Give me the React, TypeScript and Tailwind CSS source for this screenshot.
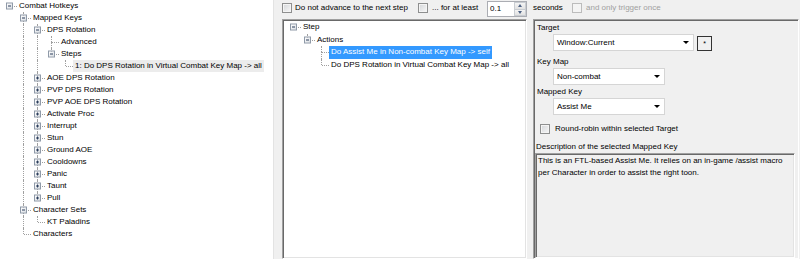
import React from 'react';

type TNode = { label: string; children?: TNode[]; collapsed?: boolean; sel?: 'gray' | 'blue' };
type Flat = { node: TNode; level: number; last: boolean; cont: boolean[]; first: boolean };

function flatten(nodes: TNode[], level: number, cont: boolean[], out: Flat[]) {
  nodes.forEach((n, i) => {
    const last = i === nodes.length - 1;
    out.push({ node: n, level, last, cont, first: level === 0 && i === 0 });
    if (n.children && n.children.length && !n.collapsed) flatten(n.children, level + 1, [...cont, !last], out);
  });
}

const c = (label: string): TNode => ({ label, children: [{ label: 'x' }], collapsed: true });

const leftData: TNode[] = [
  {
    label: 'Combat Hotkeys',
    children: [
      {
        label: 'Mapped Keys',
        children: [
          {
            label: 'DPS Rotation',
            children: [
              { label: 'Advanced' },
              {
                label: 'Steps',
                children: [{ label: '1: Do DPS Rotation in Virtual Combat Key Map -> all', sel: 'gray' }],
              },
            ],
          },
          c('AOE DPS Rotation'),
          c('PVP DPS Rotation'),
          c('PVP AOE DPS Rotation'),
          c('Activate Proc'),
          c('Interrupt'),
          c('Stun'),
          c('Ground AOE'),
          c('Cooldowns'),
          c('Panic'),
          c('Taunt'),
          c('Pull'),
        ],
      },
      { label: 'Character Sets', children: [{ label: 'KT Paladins' }] },
      { label: 'Characters' },
    ],
  },
];

const midData: TNode[] = [
  {
    label: 'Step',
    children: [
      {
        label: 'Actions',
        children: [
          { label: 'Do Assist Me in Non-combat Key Map -> self', sel: 'blue' },
          { label: 'Do DPS Rotation in Virtual Combat Key Map -> all' },
        ],
      },
    ],
  },
];

function Expander({ open }: { open: boolean }) {
  return (
    <div className="absolute left-[4px] top-1/2 -translate-y-1/2 w-[7px] h-[7px] border border-[#8f9aa8] bg-gradient-to-br from-white to-[#d9dde2]">
      <div className="absolute left-[1px] top-[2px] w-[3px] h-[1px] bg-[#2c3e5c]" />
      {!open && <div className="absolute left-[2px] top-[1px] w-[1px] h-[3px] bg-[#2c3e5c]" />}
    </div>
  );
}

function Tree({ data, rowH }: { data: TNode[]; rowH: string }) {
  const rows: Flat[] = [];
  flatten(data, 0, [], rows);
  return (
    <div className="flex flex-col">
      {rows.map((f, i) => {
        const kids = !!(f.node.children && f.node.children.length);
        const sel =
          f.node.sel === 'blue'
            ? 'bg-[#3399ff] text-white'
            : f.node.sel === 'gray'
            ? 'bg-[#ececec]'
            : '';
        return (
          <div key={i} className={`flex ${rowH}`}>
            {f.cont.map((cc, k) => (
              <div key={k} className="relative w-[14px] shrink-0">
                {cc && <div className="absolute left-[7px] top-0 bottom-0 border-l border-dotted border-[#a0a0a0]" />}
              </div>
            ))}
            <div className="relative w-[14px] shrink-0">
              {!f.first && <div className="absolute left-[7px] top-0 h-1/2 border-l border-dotted border-[#a0a0a0]" />}
              {!f.last && <div className="absolute left-[7px] top-1/2 bottom-0 border-l border-dotted border-[#a0a0a0]" />}
              <div className="absolute left-[8px] -right-[1px] top-1/2 border-t border-dotted border-[#a0a0a0]" />
              {kids && <Expander open={!f.node.collapsed} />}
            </div>
            <div className={`ml-[1px] px-[2px] whitespace-nowrap flex items-center ${sel}`}>{f.node.label}</div>
          </div>
        );
      })}
    </div>
  );
}

function Check({ disabled }: { disabled?: boolean }) {
  return disabled ? (
    <div className="w-[10px] h-[10px] shrink-0 border border-[#bcbcbc] bg-[#f4f4f4]" />
  ) : (
    <div className="w-[10px] h-[10px] shrink-0 border border-[#8e8f8f] bg-gradient-to-br from-[#d3d5d8] to-[#f8f8f8] shadow-[inset_0_0_0_1px_#f4f4f4]" />
  );
}

function Arrow() {
  return (
    <div className="w-0 h-0 border-l-[3px] border-r-[3px] border-t-[3px] border-l-transparent border-r-transparent border-t-black" />
  );
}

function Combo({ wide, text }: { wide?: boolean; text: string }) {
  return (
    <div
      className={`${wide ? 'w-[141px]' : 'w-[112px]'} h-[17px] bg-white border border-[#d5d5d5] flex items-center pl-[3px] pr-[4px]`}
    >
      <span className="flex-1 whitespace-nowrap">{text}</span>
      <Arrow />
    </div>
  );
}

export default function App() {
  return (
    <div className="w-[800px] h-[259px] overflow-hidden bg-[#f0f0f0] flex font-['Liberation_Sans',Arial,sans-serif] text-[8px] leading-[12px] text-black">
      {/* left tree */}
      <div className="w-[274px] h-full shrink-0 bg-white border-r border-[#e3e3e3] pl-[2px]">
        <Tree data={leftData} rowH="h-[12px]" />
      </div>

      {/* right area */}
      <div className="flex-1 flex flex-col pl-[8px]">
        {/* top row */}
        <div className="h-[19px] flex items-start shrink-0">
          <div className="mt-[3px]">
            <Check />
          </div>
          <div className="ml-[3px] w-[123px] mt-[2px] whitespace-nowrap">Do not advance to the next step</div>
          <div className="mt-[3px]">
            <Check />
          </div>
          <div className="ml-[4px] w-[55px] mt-[2px] whitespace-nowrap">... for at least</div>
          <div className="mt-[1px] w-[40px] h-[16px] bg-white border border-[#abadb3] flex">
            <div className="flex-1 pl-[2px] leading-[14px]">0.1</div>
            <div className="w-[12px] flex flex-col">
              <div className="flex-1 flex items-center justify-center bg-gradient-to-b from-[#f4f4f4] to-[#e2e2e2] border border-[#c9cdd2]">
                <div className="w-0 h-0 border-l-[2px] border-r-[2px] border-b-[3px] border-l-transparent border-r-transparent border-b-[#4e6284]" />
              </div>
              <div className="flex-1 flex items-center justify-center bg-gradient-to-b from-[#f4f4f4] to-[#e2e2e2] border border-t-0 border-[#c9cdd2]">
                <div className="w-0 h-0 border-l-[2px] border-r-[2px] border-t-[3px] border-l-transparent border-r-transparent border-t-[#4e6284]" />
              </div>
            </div>
          </div>
          <div className="ml-[6px] w-[39px] mt-[2px] whitespace-nowrap">seconds</div>
          <div className="mt-[3px]">
            <Check disabled />
          </div>
          <div className="ml-[4px] mt-[2px] whitespace-nowrap text-[#a0a0a0]">and only trigger once</div>
        </div>

        {/* lower row */}
        <div className="flex-1 flex min-h-0">
          <div className="w-[245px] shrink-0 bg-white border-t border-l border-[#a0a0a0] border-r border-b border-r-white border-b-white shadow-[inset_1px_1px_0_#696969,inset_-1px_-1px_0_#e3e3e3] pt-[1px] pl-[3px]">
            <Tree data={midData} rowH="h-[12.5px]" />
          </div>
          <div className="w-[6px] shrink-0" />
          <div className="w-[266px] shrink-0 flex flex-col border-t border-l border-[#a0a0a0] border-r border-b border-r-white border-b-white shadow-[inset_1px_1px_0_#696969] pl-[1px] pt-[1px]">
            <div className="h-[12px] mt-[1px] pl-[2px]">Target</div>
            <div className="flex items-start pl-[18px]">
              <Combo wide text="Window:Current" />
              <div className="ml-[3px] mt-[2px] w-[15px] h-[15px] border border-[#333] bg-[#f0f0f0] flex items-center justify-center text-[7px] leading-none">
                *
              </div>
            </div>
            <div className="h-[12px] mt-[5px] pl-[2px]">Key Map</div>
            <div className="pl-[18px]">
              <Combo text="Non-combat" />
            </div>
            <div className="h-[12px] mt-[1px] pl-[2px]">Mapped Key</div>
            <div className="pl-[18px]">
              <Combo text="Assist Me" />
            </div>
            <div className="mt-[8px] h-[12px] flex items-center pl-[5px]">
              <Check />
              <span className="ml-[5px] whitespace-nowrap">Round-robin within selected Target</span>
            </div>
            <div className="mt-[6px] h-[12px] pl-[1px]">Description of the selected Mapped Key</div>
            <div className="flex-1 mr-[3px] bg-[#f0f0f0] border-t border-l border-[#a0a0a0] border-r border-b border-r-white border-b-white shadow-[inset_1px_1px_0_#696969,inset_-1px_-1px_0_#e3e3e3] pt-[1px] pl-[2px]">
              This is an FTL-based Assist Me. It relies on an in-game /assist macro
              <br />
              per Character in order to assist the right toon.
            </div>
          </div>
        </div>
      </div>
    </div>
  );
}
